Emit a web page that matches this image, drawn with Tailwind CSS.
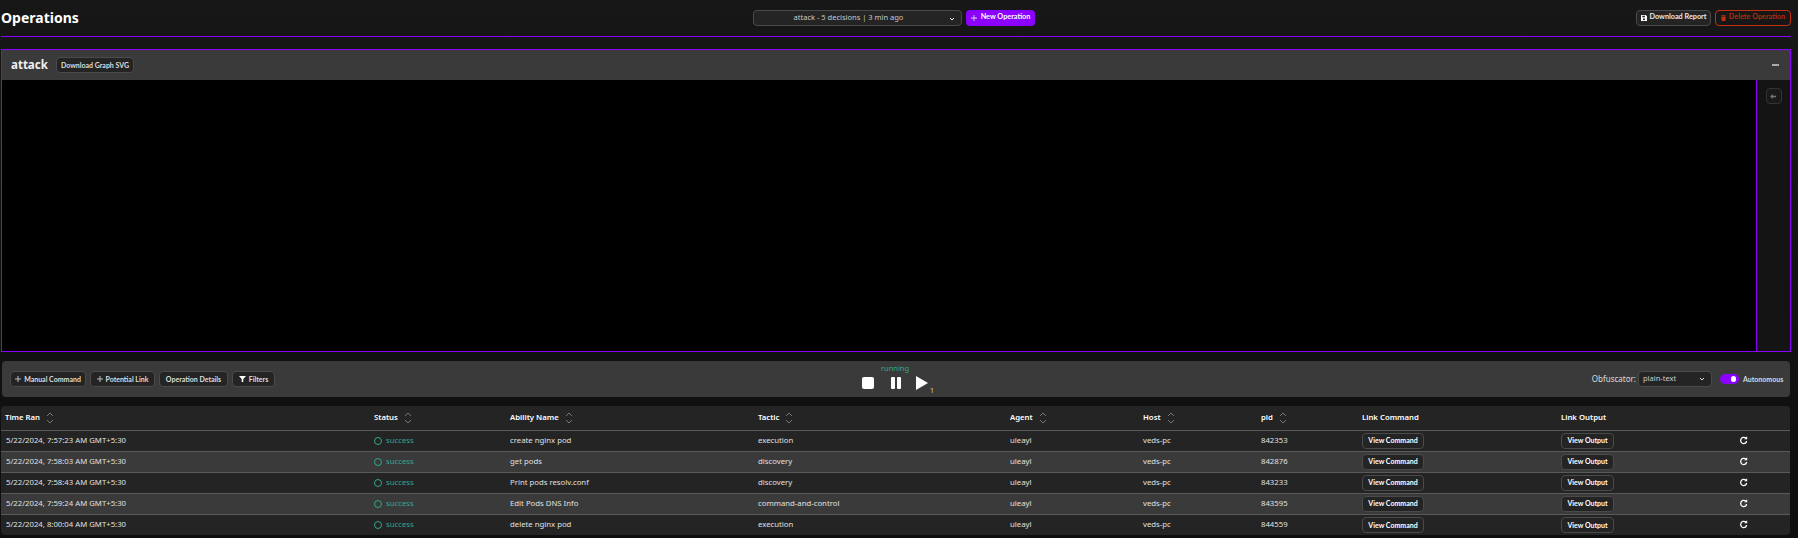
<!DOCTYPE html>
<html><head><meta charset="utf-8"><script src="https://cdn.jsdelivr.net/npm/@tailwindcss/browser@4"></script></head>
<body class="bg-[#141414] font-['Noto_Sans',sans-serif] text-white overflow-hidden whitespace-nowrap">
<div class="w-[1798px] h-[538px] flex flex-col bg-gradient-to-b from-[#171717] to-[#0e0e0e]">
  <header class="h-[37px] ml-[1px] mr-[7px] border-b border-[#8b00ff] grid grid-cols-[752px_auto_1fr] items-center pb-[1px]">
    <h1 class="text-[14px] font-bold leading-none">Operations</h1>
    <div class="flex items-center gap-[4px]">
      <div class="w-[209px] h-[16px] rounded-[4px] border border-[#4a4a4a] bg-[#242424] relative flex items-center justify-center text-[7.500px] text-[#c8c8c8]">
        <span class="pr-[18px]">attack - 5 decisions | 3 min ago</span>
        <svg class="absolute right-[5px] top-[4px]" width="8" height="8" viewBox="0 0 8 8" fill="none" stroke="#fff" stroke-width="1"><path d="M2 3l2 2 2-2"/></svg>
      </div>
      <div class="w-[69px] h-[16px] rounded-[4px] bg-[#8b00ff] flex items-center justify-center gap-[4px] font-['Lato',sans-serif] text-[7.250px] font-bold"><svg width="6" height="6" viewBox="0 0 7 7" fill="#ddd"><path d="M3 0h1v3h3v1H4v3H3V4H0V3h3z"/></svg>New Operation</div>
    </div>
    <div class="flex justify-end gap-[4px]">
      <div class="w-[75px] h-[16px] rounded-[4px] border border-[#4a4a4a] bg-[#242424] flex items-center justify-center gap-[3px] font-['Lato',sans-serif] text-[7.250px] font-bold text-[#e8e8e8]"><svg width="6" height="6" viewBox="0 0 7 7" fill="#fff"><path d="M0 0h5.500L7 1.500V7H0zM1.500 .8v1.700h3V.8zM3.500 3.800a1.200 1.200 0 100 2.400 1.200 1.200 0 000-2.400z" fill-rule="evenodd"/></svg>Download Report</div>
      <div class="w-[76px] h-[16px] rounded-[4px] border border-[#c52f10] flex items-center justify-center gap-[3px] font-['Lato',sans-serif] text-[7.250px] font-bold text-[#b32a0e]"><svg width="5" height="6" viewBox="0 0 6 7" fill="#c52f10"><path d="M0 .5h2L2.300 0h1.400L4 .5h2v1H0zM.4 2h5.200L5.200 7H.8z"/></svg>Delete Operation</div>
    </div>
  </header>
  <section class="mt-[12px] ml-[1px] mr-[7px] h-[303px] border border-[#8b00ff] flex flex-col">
    <div class="h-[30px] bg-[#3a3a3a] flex items-center pl-[9px] pr-[11px] shrink-0">
      <span class="text-[11.500px] font-bold leading-none text-[#f0f0f0] w-[45px]">attack</span>
      <span class="w-[78px] h-[16px] rounded-[4px] border border-[#4a4a4a] bg-[#242424] flex items-center justify-center font-['Lato',sans-serif] text-[7px] font-bold text-[#ddd]">Download Graph SVG</span>
      <span class="ml-auto w-[7px] h-[2px] bg-[#aaa]"></span>
    </div>
    <div class="flex-1 flex">
      <div class="flex-1 bg-black"></div>
      <div class="w-[34px] bg-[#141414] border-l border-[#8b00ff] flex justify-center pt-[8px]">
        <div class="w-[16px] h-[16px] rounded-[4px] border border-[#333] bg-[#1a1a1a] flex items-center justify-center"><svg width="7" height="5" viewBox="0 0 8 6" fill="#777"><path d="M3 0v2h4v2H3v2L0 3z"/></svg></div>
      </div>
    </div>
  </section>
  <div class="mt-[9px] ml-[2px] mr-[8px] h-[36px] rounded-[4px] bg-[#3a3a3a] relative flex items-center pl-[8px] pr-[8px]">
    <div class="flex gap-[4px]">
      <span class="w-[76px] h-[16px] rounded-[4px] border border-[#4a4a4a] bg-[#242424] flex items-center justify-center gap-[3px] font-['Lato',sans-serif] text-[7px] font-bold text-[#ddd]"><svg width="6" height="6" viewBox="0 0 6 6" fill="#bbb"><path d="M2.500 0h1v2.500H6v1H3.500V6h-1V3.500H0v-1h2.500z"/></svg>Manual Command</span>
      <span class="w-[65px] h-[16px] rounded-[4px] border border-[#4a4a4a] bg-[#242424] flex items-center justify-center gap-[3px] font-['Lato',sans-serif] text-[7px] font-bold text-[#ddd]"><svg width="6" height="6" viewBox="0 0 6 6" fill="#bbb"><path d="M2.500 0h1v2.500H6v1H3.500V6h-1V3.500H0v-1h2.500z"/></svg>Potential Link</span>
      <span class="w-[69px] h-[16px] rounded-[4px] border border-[#4a4a4a] bg-[#242424] flex items-center justify-center font-['Lato',sans-serif] text-[7px] font-bold text-[#ddd]">Operation Details</span>
      <span class="w-[43px] h-[16px] rounded-[4px] border border-[#4a4a4a] bg-[#242424] flex items-center justify-center gap-[3px] font-['Lato',sans-serif] text-[7px] font-bold text-[#ddd]"><svg width="7" height="6" viewBox="0 0 7 6" fill="#fff"><path d="M0 0h7L4.300 3v3H2.700V3z"/></svg>Filters</span>
    </div>
    <div class="absolute left-[860px] top-0 w-[66px] flex flex-col items-center">
      <span class="text-[7.500px] leading-none mt-[4px] text-[#2fa88a]">running</span>
      <div class="flex items-center mt-[3px] h-[14px]">
        <span class="w-[12px] h-[12px] rounded-[2px] bg-white"></span>
        <span class="ml-[17px] flex gap-[2px]"><span class="w-[4px] h-[12px] rounded-[1px] bg-white"></span><span class="w-[4px] h-[12px] rounded-[1px] bg-white"></span></span>
        <svg class="ml-[15px]" width="12" height="14" viewBox="0 0 12 14" fill="#fff"><path d="M0 0l12 7-12 7z"/></svg>
      </div>
      <span class="absolute left-[68px] top-[26px] text-[7px] leading-none text-[#e0d080]">1</span>
    </div>
    <div class="ml-auto flex items-center">
      <span class="text-[8px] text-[#ddd] mr-[2px]">Obfuscator:</span>
      <span class="w-[74px] h-[16px] rounded-[4px] border border-[#4a4a4a] bg-[#242424] flex items-center justify-between pl-[4px] pr-[5px] text-[7.500px] text-[#ccc]">plain-text<svg width="8" height="8" viewBox="0 0 8 8" fill="none" stroke="#ddd"><path d="M2 3l2 2 2-2"/></svg></span>
      <span class="ml-[8px] w-[19px] h-[10px] rounded-full bg-[#8b00ff] relative"><span class="absolute right-[3px] top-[2px] w-[5px] h-[6px] rounded-full bg-white"></span></span>
      <span class="ml-[4px] w-[39px] font-['Lato',sans-serif] text-[7px] font-bold text-[#ddd]">Autonomous</span>
    </div>
  </div>
  <div class="mt-[9px] ml-[1px] mr-[8px] rounded-[4px] bg-[#242424] h-[129px] overflow-hidden">
    <table class="w-full table-fixed border-collapse text-[7.750px] text-[#e0e0e0]">
      <colgroup><col class="w-[373px]"><col class="w-[136px]"><col class="w-[248px]"><col class="w-[252px]"><col class="w-[133px]"><col class="w-[118px]"><col class="w-[101px]"><col class="w-[199px]"><col></colgroup>
      <thead><tr class="h-[24px] border-b border-[#5a5a5a] text-left text-white">
        <th class="pl-[4px] font-semibold"><span class="flex items-center gap-[6px]">Time Ran<svg width="8" height="12" viewBox="0 0 8 12" fill="none" stroke="#777"><path d="M1 4l3-3 3 3M1 8l3 3 3-3"/></svg></span></th>
        <th class="font-semibold"><span class="flex items-center gap-[6px]">Status<svg width="8" height="12" viewBox="0 0 8 12" fill="none" stroke="#777"><path d="M1 4l3-3 3 3M1 8l3 3 3-3"/></svg></span></th>
        <th class="font-semibold"><span class="flex items-center gap-[6px]">Ability Name<svg width="8" height="12" viewBox="0 0 8 12" fill="none" stroke="#777"><path d="M1 4l3-3 3 3M1 8l3 3 3-3"/></svg></span></th>
        <th class="font-semibold"><span class="flex items-center gap-[6px]">Tactic<svg width="8" height="12" viewBox="0 0 8 12" fill="none" stroke="#777"><path d="M1 4l3-3 3 3M1 8l3 3 3-3"/></svg></span></th>
        <th class="font-semibold"><span class="flex items-center gap-[6px]">Agent<svg width="8" height="12" viewBox="0 0 8 12" fill="none" stroke="#777"><path d="M1 4l3-3 3 3M1 8l3 3 3-3"/></svg></span></th>
        <th class="font-semibold"><span class="flex items-center gap-[6px]">Host<svg width="8" height="12" viewBox="0 0 8 12" fill="none" stroke="#777"><path d="M1 4l3-3 3 3M1 8l3 3 3-3"/></svg></span></th>
        <th class="font-semibold"><span class="flex items-center gap-[6px]">pid<svg width="8" height="12" viewBox="0 0 8 12" fill="none" stroke="#777"><path d="M1 4l3-3 3 3M1 8l3 3 3-3"/></svg></span></th>
        <th class="font-semibold">Link Command</th>
        <th class="font-semibold">Link Output</th>
      </tr></thead>
      <tbody>
        <tr class="h-[21px] border-b border-[#5a5a5a]"><td class="pl-[5px]">5/22/2024, 7:57:23 AM GMT+5:30</td><td><span class="flex items-center gap-[4px] text-[#2fa88a]"><span class="w-[8px] h-[8px] rounded-full border border-[#2fa88a]"></span>success</span></td><td>create nginx pod</td><td>execution</td><td>uleayl</td><td>veds-pc</td><td>842353</td><td><span class="inline-flex w-[62px] h-[16px] rounded-[4px] border border-[#4a4a4a] bg-[#242424] items-center justify-center font-['Lato',sans-serif] text-[7px] font-bold text-white">View Command</span></td><td><div class="flex"><span class="inline-flex w-[53px] h-[16px] rounded-[4px] border border-[#4a4a4a] bg-[#242424] items-center justify-center font-['Lato',sans-serif] text-[7px] font-bold text-white">View Output</span><svg class="ml-[125px] mt-[3px]" width="9" height="9" viewBox="0 0 9 9" fill="none" stroke="#fff" stroke-width="1.300"><path d="M6.800 2A3.200 3.200 0 104.300 7.700 3.200 3.200 0 007.600 5"/><path d="M8.200 .2v3H5.200z" fill="#fff" stroke="none"/></svg></div></td></tr>
        <tr class="h-[21px] border-b border-[#5a5a5a] bg-[#3a3a3a]"><td class="pl-[5px]">5/22/2024, 7:58:03 AM GMT+5:30</td><td><span class="flex items-center gap-[4px] text-[#2fa88a]"><span class="w-[8px] h-[8px] rounded-full border border-[#2fa88a]"></span>success</span></td><td>get pods</td><td>discovery</td><td>uleayl</td><td>veds-pc</td><td>842876</td><td><span class="inline-flex w-[62px] h-[16px] rounded-[4px] border border-[#4a4a4a] bg-[#242424] items-center justify-center font-['Lato',sans-serif] text-[7px] font-bold text-white">View Command</span></td><td><div class="flex"><span class="inline-flex w-[53px] h-[16px] rounded-[4px] border border-[#4a4a4a] bg-[#242424] items-center justify-center font-['Lato',sans-serif] text-[7px] font-bold text-white">View Output</span><svg class="ml-[125px] mt-[3px]" width="9" height="9" viewBox="0 0 9 9" fill="none" stroke="#fff" stroke-width="1.300"><path d="M6.800 2A3.200 3.200 0 104.300 7.700 3.200 3.200 0 007.600 5"/><path d="M8.200 .2v3H5.200z" fill="#fff" stroke="none"/></svg></div></td></tr>
        <tr class="h-[21px] border-b border-[#5a5a5a]"><td class="pl-[5px]">5/22/2024, 7:58:43 AM GMT+5:30</td><td><span class="flex items-center gap-[4px] text-[#2fa88a]"><span class="w-[8px] h-[8px] rounded-full border border-[#2fa88a]"></span>success</span></td><td>Print pods resolv.conf</td><td>discovery</td><td>uleayl</td><td>veds-pc</td><td>843233</td><td><span class="inline-flex w-[62px] h-[16px] rounded-[4px] border border-[#4a4a4a] bg-[#242424] items-center justify-center font-['Lato',sans-serif] text-[7px] font-bold text-white">View Command</span></td><td><div class="flex"><span class="inline-flex w-[53px] h-[16px] rounded-[4px] border border-[#4a4a4a] bg-[#242424] items-center justify-center font-['Lato',sans-serif] text-[7px] font-bold text-white">View Output</span><svg class="ml-[125px] mt-[3px]" width="9" height="9" viewBox="0 0 9 9" fill="none" stroke="#fff" stroke-width="1.300"><path d="M6.800 2A3.200 3.200 0 104.300 7.700 3.200 3.200 0 007.600 5"/><path d="M8.200 .2v3H5.200z" fill="#fff" stroke="none"/></svg></div></td></tr>
        <tr class="h-[21px] border-b border-[#5a5a5a] bg-[#3a3a3a]"><td class="pl-[5px]">5/22/2024, 7:59:24 AM GMT+5:30</td><td><span class="flex items-center gap-[4px] text-[#2fa88a]"><span class="w-[8px] h-[8px] rounded-full border border-[#2fa88a]"></span>success</span></td><td>Edit Pods DNS Info</td><td>command-and-control</td><td>uleayl</td><td>veds-pc</td><td>843595</td><td><span class="inline-flex w-[62px] h-[16px] rounded-[4px] border border-[#4a4a4a] bg-[#242424] items-center justify-center font-['Lato',sans-serif] text-[7px] font-bold text-white">View Command</span></td><td><div class="flex"><span class="inline-flex w-[53px] h-[16px] rounded-[4px] border border-[#4a4a4a] bg-[#242424] items-center justify-center font-['Lato',sans-serif] text-[7px] font-bold text-white">View Output</span><svg class="ml-[125px] mt-[3px]" width="9" height="9" viewBox="0 0 9 9" fill="none" stroke="#fff" stroke-width="1.300"><path d="M6.800 2A3.200 3.200 0 104.300 7.700 3.200 3.200 0 007.600 5"/><path d="M8.200 .2v3H5.200z" fill="#fff" stroke="none"/></svg></div></td></tr>
        <tr class="h-[21px]"><td class="pl-[5px]">5/22/2024, 8:00:04 AM GMT+5:30</td><td><span class="flex items-center gap-[4px] text-[#2fa88a]"><span class="w-[8px] h-[8px] rounded-full border border-[#2fa88a]"></span>success</span></td><td>delete nginx pod</td><td>execution</td><td>uleayl</td><td>veds-pc</td><td>844559</td><td><span class="inline-flex w-[62px] h-[16px] rounded-[4px] border border-[#4a4a4a] bg-[#242424] items-center justify-center font-['Lato',sans-serif] text-[7px] font-bold text-white">View Command</span></td><td><div class="flex"><span class="inline-flex w-[53px] h-[16px] rounded-[4px] border border-[#4a4a4a] bg-[#242424] items-center justify-center font-['Lato',sans-serif] text-[7px] font-bold text-white">View Output</span><svg class="ml-[125px] mt-[3px]" width="9" height="9" viewBox="0 0 9 9" fill="none" stroke="#fff" stroke-width="1.300"><path d="M6.800 2A3.200 3.200 0 104.300 7.700 3.200 3.200 0 007.600 5"/><path d="M8.200 .2v3H5.200z" fill="#fff" stroke="none"/></svg></div></td></tr>
      </tbody>
    </table>
  </div>
</div>
</body></html>
